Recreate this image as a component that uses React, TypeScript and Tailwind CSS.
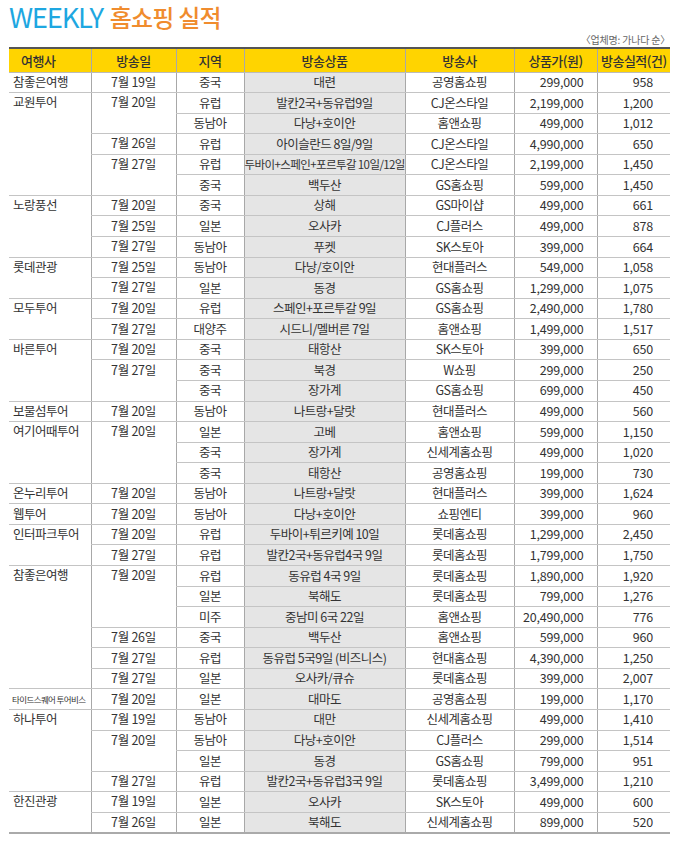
import React from "react";

type Row = [string, string, string, string, string];
type DateGroup = { date: string; rows: Row[] };
type Company = { name: string; small?: boolean; dates: DateGroup[] };

const data: Company[] = [
  { name: "참좋은여행", dates: [{ date: "7월 19일", rows: [["중국", "대련", "공영홈쇼핑", "299,000", "958"]] }] },
  {
    name: "교원투어",
    dates: [
      { date: "7월 20일", rows: [["유럽", "발칸2국+동유럽9일", "CJ온스타일", "2,199,000", "1,200"], ["동남아", "다낭+호이안", "홈앤쇼핑", "499,000", "1,012"]] },
      { date: "7월 26일", rows: [["유럽", "아이슬란드 8일/9일", "CJ온스타일", "4,990,000", "650"]] },
      { date: "7월 27일", rows: [["유럽", "두바이+스페인+포르투갈 10일/12일", "CJ온스타일", "2,199,000", "1,450"], ["중국", "백두산", "GS홈쇼핑", "599,000", "1,450"]] },
    ],
  },
  {
    name: "노랑풍선",
    dates: [
      { date: "7월 20일", rows: [["중국", "상해", "GS마이샵", "499,000", "661"]] },
      { date: "7월 25일", rows: [["일본", "오사카", "CJ플러스", "499,000", "878"]] },
      { date: "7월 27일", rows: [["동남아", "푸켓", "SK스토아", "399,000", "664"]] },
    ],
  },
  {
    name: "롯데관광",
    dates: [
      { date: "7월 25일", rows: [["동남아", "다낭/호이안", "현대플러스", "549,000", "1,058"]] },
      { date: "7월 27일", rows: [["일본", "동경", "GS홈쇼핑", "1,299,000", "1,075"]] },
    ],
  },
  {
    name: "모두투어",
    dates: [
      { date: "7월 20일", rows: [["유럽", "스페인+포르투갈 9일", "GS홈쇼핑", "2,490,000", "1,780"]] },
      { date: "7월 27일", rows: [["대양주", "시드니/멜버른 7일", "홈앤쇼핑", "1,499,000", "1,517"]] },
    ],
  },
  {
    name: "바른투어",
    dates: [
      { date: "7월 20일", rows: [["중국", "태항산", "SK스토아", "399,000", "650"]] },
      { date: "7월 27일", rows: [["중국", "북경", "W쇼핑", "299,000", "250"], ["중국", "장가계", "GS홈쇼핑", "699,000", "450"]] },
    ],
  },
  { name: "보물섬투어", dates: [{ date: "7월 20일", rows: [["동남아", "나트랑+달랏", "현대플러스", "499,000", "560"]] }] },
  {
    name: "여기어때투어",
    dates: [
      {
        date: "7월 20일",
        rows: [
          ["일본", "고베", "홈앤쇼핑", "599,000", "1,150"],
          ["중국", "장가계", "신세계홈쇼핑", "499,000", "1,020"],
          ["중국", "태항산", "공영홈쇼핑", "199,000", "730"],
        ],
      },
    ],
  },
  { name: "온누리투어", dates: [{ date: "7월 20일", rows: [["동남아", "나트랑+달랏", "현대플러스", "399,000", "1,624"]] }] },
  { name: "웹투어", dates: [{ date: "7월 20일", rows: [["동남아", "다낭+호이안", "쇼핑엔티", "399,000", "960"]] }] },
  {
    name: "인터파크투어",
    dates: [
      { date: "7월 20일", rows: [["유럽", "두바이+튀르키예 10일", "롯데홈쇼핑", "1,299,000", "2,450"]] },
      { date: "7월 27일", rows: [["유럽", "발칸2국+동유럽4국 9일", "롯데홈쇼핑", "1,799,000", "1,750"]] },
    ],
  },
  {
    name: "참좋은여행",
    dates: [
      {
        date: "7월 20일",
        rows: [
          ["유럽", "동유럽 4국 9일", "롯데홈쇼핑", "1,890,000", "1,920"],
          ["일본", "북해도", "롯데홈쇼핑", "799,000", "1,276"],
          ["미주", "중남미 6국 22일", "홈앤쇼핑", "20,490,000", "776"],
        ],
      },
      { date: "7월 26일", rows: [["중국", "백두산", "홈앤쇼핑", "599,000", "960"]] },
      { date: "7월 27일", rows: [["유럽", "동유럽 5국9일 (비즈니스)", "현대홈쇼핑", "4,390,000", "1,250"]] },
      { date: "7월 27일", rows: [["일본", "오사카/큐슈", "롯데홈쇼핑", "399,000", "2,007"]] },
    ],
  },
  { name: "타이드스퀘어 투어비스", small: true, dates: [{ date: "7월 20일", rows: [["일본", "대마도", "공영홈쇼핑", "199,000", "1,170"]] }] },
  {
    name: "하나투어",
    dates: [
      { date: "7월 19일", rows: [["동남아", "대만", "신세계홈쇼핑", "499,000", "1,410"]] },
      { date: "7월 20일", rows: [["동남아", "다낭+호이안", "CJ플러스", "299,000", "1,514"], ["일본", "동경", "GS홈쇼핑", "799,000", "951"]] },
      { date: "7월 27일", rows: [["유럽", "발칸2국+동유럽3국 9일", "롯데홈쇼핑", "3,499,000", "1,210"]] },
    ],
  },
  {
    name: "한진관광",
    dates: [
      { date: "7월 19일", rows: [["일본", "오사카", "SK스토아", "499,000", "600"]] },
      { date: "7월 26일", rows: [["일본", "북해도", "신세계홈쇼핑", "899,000", "520"]] },
    ],
  },
];

const font = { fontFamily: '"Noto Sans CJK KR", "Noto Sans", sans-serif' };

export default function App() {
  const trs: React.ReactNode[] = [];
  let key = 0;
  data.forEach((c) => {
    const cTotal = c.dates.reduce((s, d) => s + d.rows.length, 0);
    c.dates.forEach((d, di) => {
      d.rows.forEach((r, ri) => {
        trs.push(
          <tr key={key++} className="h-[20.57px]">
            {di === 0 && ri === 0 && (
              <td rowSpan={cTotal} className="align-top border-b border-[#c4c4c4] p-0">
                {c.small ? (
                  <div className="h-[19px] flex items-center pl-[3px] text-[8.5px] tracking-[-0.6px] whitespace-nowrap">{c.name}</div>
                ) : (
                  <div className="h-[19px] flex items-center pl-[4px] tracking-[-0.5px]">{c.name}</div>
                )}
              </td>
            )}
            {ri === 0 && (
              <td rowSpan={d.rows.length} className="align-top border-b border-l border-l-[#a8a8a8] border-b-[#c4c4c4] p-0">
                <div className="h-[19px] flex items-center justify-center tracking-[-0.3px]">{d.date}</div>
              </td>
            )}
            <td className="border-b border-l border-l-[#a8a8a8] border-b-[#c4c4c4] p-0 text-center tracking-[-0.5px]">{r[0]}</td>
            <td className="border-b border-l border-l-[#a8a8a8] border-b-[#c4c4c4] bg-[#e5e5e5] p-0 text-center tracking-[-0.5px] whitespace-nowrap">
              <span className={r[1].length > 16 ? "text-[11.5px] tracking-[-0.6px]" : ""}>{r[1]}</span>
            </td>
            <td className="border-b border-l border-l-[#a8a8a8] border-b-[#c4c4c4] p-0 text-center tracking-[-0.5px]">{r[2]}</td>
            <td className="border-b border-l border-l-[#a8a8a8] border-b-[#c4c4c4] p-0 text-right pr-[13px] tracking-[-0.2px]">{r[3]}</td>
            <td className="border-b border-l border-l-[#a8a8a8] border-b-[#c4c4c4] p-0 text-right pr-[17px] tracking-[-0.2px]">{r[4]}</td>
          </tr>
        );
      });
    });
  });

  return (
    <div className="w-[681px] h-[841px] bg-white text-[#333]" style={font}>
      <div className="pl-[9px] h-[33px] flex items-center">
        <span className="text-[#1ea7e1] text-[27.5px] leading-[33px] tracking-[-1.3px] pr-[2px]">WEEKLY</span>
        <span className="text-[#f08c2e] text-[24px] leading-[33px] font-medium tracking-[-0.8px] ml-[5px] pr-[2px]">홈쇼핑 실적</span>
      </div>
      <div className="h-[14px] flex justify-end pr-[11px] text-[10px] text-[#666] leading-[14px] tracking-[-0.2px]">〈업체명: 가나다 순〉</div>
      <table className="ml-[9px] w-[661px] table-fixed border-collapse text-[12.5px] leading-none">
        <colgroup>
          <col className="w-[82px]" />
          <col className="w-[85px]" />
          <col className="w-[68px]" />
          <col className="w-[161px]" />
          <col className="w-[109px]" />
          <col className="w-[83px]" />
          <col className="w-[73px]" />
        </colgroup>
        <thead>
          <tr className="h-[24px] bg-[#ffd400] text-[13px] font-medium text-[#333]">
            <th className="border-t-2 border-t-[#555] border-b border-b-[#bbb] p-0 text-left pl-[12px] font-medium tracking-[-0.5px]">여행사</th>
            <th className="border-t-2 border-t-[#555] border-b border-b-[#bbb] border-l border-l-[#a8a8a8] p-0 font-medium tracking-[-0.5px]">방송일</th>
            <th className="border-t-2 border-t-[#555] border-b border-b-[#bbb] border-l border-l-[#a8a8a8] p-0 font-medium tracking-[-0.5px]">지역</th>
            <th className="border-t-2 border-t-[#555] border-b border-b-[#bbb] border-l border-l-[#a8a8a8] p-0 font-medium tracking-[-0.5px]">방송상품</th>
            <th className="border-t-2 border-t-[#555] border-b border-b-[#bbb] border-l border-l-[#a8a8a8] p-0 font-medium tracking-[-0.5px]">방송사</th>
            <th className="border-t-2 border-t-[#555] border-b border-b-[#bbb] border-l border-l-[#a8a8a8] p-0 font-medium tracking-[-0.5px]">상품가(원)</th>
            <th className="border-t-2 border-t-[#555] border-b border-b-[#bbb] border-l border-l-[#a8a8a8] p-0 font-medium tracking-[-0.5px]">방송실적(건)</th>
          </tr>
        </thead>
        <tbody className="border-b-2 border-b-[#aaa]">{trs}</tbody>
      </table>
    </div>
  );
}
